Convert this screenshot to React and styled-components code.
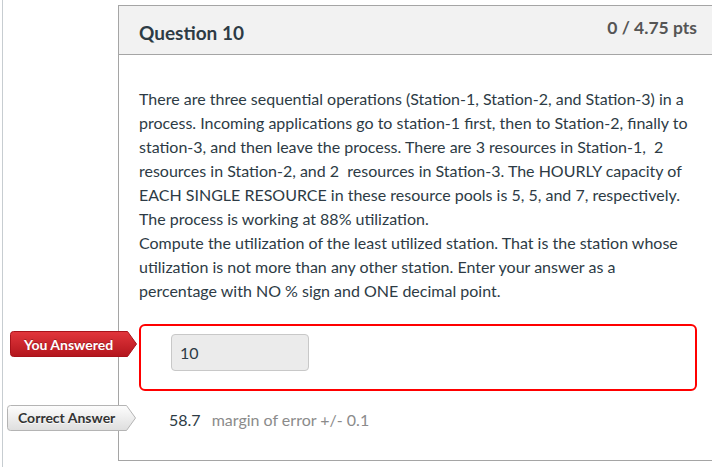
import React from "react";
import styled, { createGlobalStyle } from "styled-components";

const GlobalStyle = createGlobalStyle`
  html, body {
    margin: 0;
    padding: 0;
    background: #fff;
  }
  body {
    font-family: Lato, "Open Sans", "Liberation Sans", sans-serif;
    color: #2d3b45;
  }
`;

const Page = styled.div`
  margin-left: 2px;
  border-left: 1px solid #c7cdd1;
  min-height: 467px;
  padding-top: 5px;
  box-sizing: border-box;
  overflow: hidden;
`;

const Card = styled.div`
  margin-left: 115px;
  width: 598px;
  border: 1px solid #a5a5a5;
  background: #fff;
`;

const Header = styled.div`
  display: flex;
  justify-content: space-between;
  align-items: flex-start;
  height: 48px;
  padding: 0 20px 0 20px;
  background: #f2f2f2;
  border-bottom: 1px solid #a5a5a5;
`;

const Title = styled.div`
  margin-top: 15px;
  font-size: 19px;
  line-height: 24px;
  font-weight: 700;
  color: #2d3b45;
`;

const Points = styled.div`
  margin-top: 10px;
  font-size: 17.5px;
  line-height: 24px;
  font-weight: 700;
  color: #555;
`;

const Body = styled.div`
  padding: 32px 20px 28px 20px;
`;

const Text = styled.div`
  font-size: 16px;
  line-height: 24px;
  color: #2d3b45;

  p {
    margin: 0;
  }
`;

const AnsweredBox = styled.div`
  position: relative;
  margin-top: 21px;
  height: 67px;
  box-sizing: border-box;
  padding: 8px 30px 0;
  border: 2px solid #ff0000;
  border-radius: 6px;
`;

const AnswerInput = styled.div`
  width: 138px;
  height: 37px;
  padding: 0 8px;
  box-sizing: border-box;
  display: flex;
  align-items: center;
  background: #ebebeb;
  border: 1px solid #c8c8c8;
  border-radius: 4px;
  font-size: 16px;
  color: #2d3b45;
`;

const CorrectRow = styled.div`
  position: relative;
  margin-top: 17px;
  padding-left: 30px;
  font-size: 16px;
  line-height: 24px;
  color: #2d3b45;
`;

const Margin = styled.span`
  margin-left: 11px;
  color: #8b8b8b;
`;

const TagWrap = styled.div`
  position: absolute;
  left: ${(p) => p.$left}px;
  top: ${(p) => p.$top}px;
  width: ${(p) => p.$w}px;
  height: 26px;
  display: flex;
  align-items: center;
  padding-left: ${(p) => p.$pad}px;
  box-sizing: border-box;
  font-size: 14px;
  font-weight: 700;
  color: ${(p) => (p.$red ? "#fff" : "#333")};
  text-shadow: ${(p) =>
    p.$red ? "0 -1px 0 rgba(0,0,0,0.25)" : "0 1px 0 rgba(255,255,255,0.8)"};

  svg {
    position: absolute;
    left: 0;
    top: 0;
    z-index: 0;
  }
  span {
    position: relative;
    z-index: 1;
  }
`;

const Tag = ({ red, label, left, top }) => {
  const w = red ? 127 : 129;
  const id = red ? "gRed" : "gGray";
  return (
    <TagWrap $red={red} $left={left} $top={top} $w={w} $pad={red ? 14 : 11}>
      <svg width={w} height="26" viewBox={`0 0 ${w} 26`}>
        <defs>
          <linearGradient id={id} x1="0" y1="0" x2="0" y2="1">
            {red ? (
              <>
                <stop offset="0" stopColor="#e2363c" />
                <stop offset="1" stopColor="#b3161d" />
              </>
            ) : (
              <>
                <stop offset="0" stopColor="#fdfdfd" />
                <stop offset="1" stopColor="#dedede" />
              </>
            )}
          </linearGradient>
        </defs>
        <path
          d={`M3.5 0.5 H${w - 9.5} L${w - 0.5} 13 L${w - 9.5} 25.5 H3.5 Q0.5 25.5 0.5 22.5 V3.5 Q0.5 0.5 3.5 0.5 Z`}
          fill={`url(#${id})`}
          stroke={red ? "#a8121a" : "#b4b4b4"}
          strokeWidth="1"
        />
      </svg>
      <span>{label}</span>
    </TagWrap>
  );
};

export default function App() {
  return (
    <>
      <GlobalStyle />
      <Page>
        <Card>
          <Header>
            <Title>Question 10</Title>
            <Points>0 / 4.75 pts</Points>
          </Header>
          <Body>
            <Text>
              <p>
                There are three sequential operations (Station-1, Station-2, and
                Station-3) in a process. Incoming applications go to station-1
                first, then to Station-2, finally to station-3, and then leave
                the process. There are 3 resources in Station-1,&nbsp; 2
                resources in Station-2, and 2&nbsp; resources in Station-3. The
                HOURLY capacity of EACH SINGLE RESOURCE in these resource pools
                is 5, 5, and 7, respectively. The process is working at 88%
                utilization.
              </p>
              <p>
                Compute the utilization of the least utilized station. That is
                the station whose utilization is not more than any other
                station. Enter your answer as a percentage with NO % sign and
                ONE decimal point.
              </p>
            </Text>
            <AnsweredBox>
              <Tag red label="You Answered" left={-131} top={5} />
              <AnswerInput>10</AnswerInput>
            </AnsweredBox>
            <CorrectRow>
              <Tag label="Correct Answer" left={-132} top={-3} />
              58.7
              <Margin>margin of error +/- 0.1</Margin>
            </CorrectRow>
          </Body>
        </Card>
      </Page>
    </>
  );
}
